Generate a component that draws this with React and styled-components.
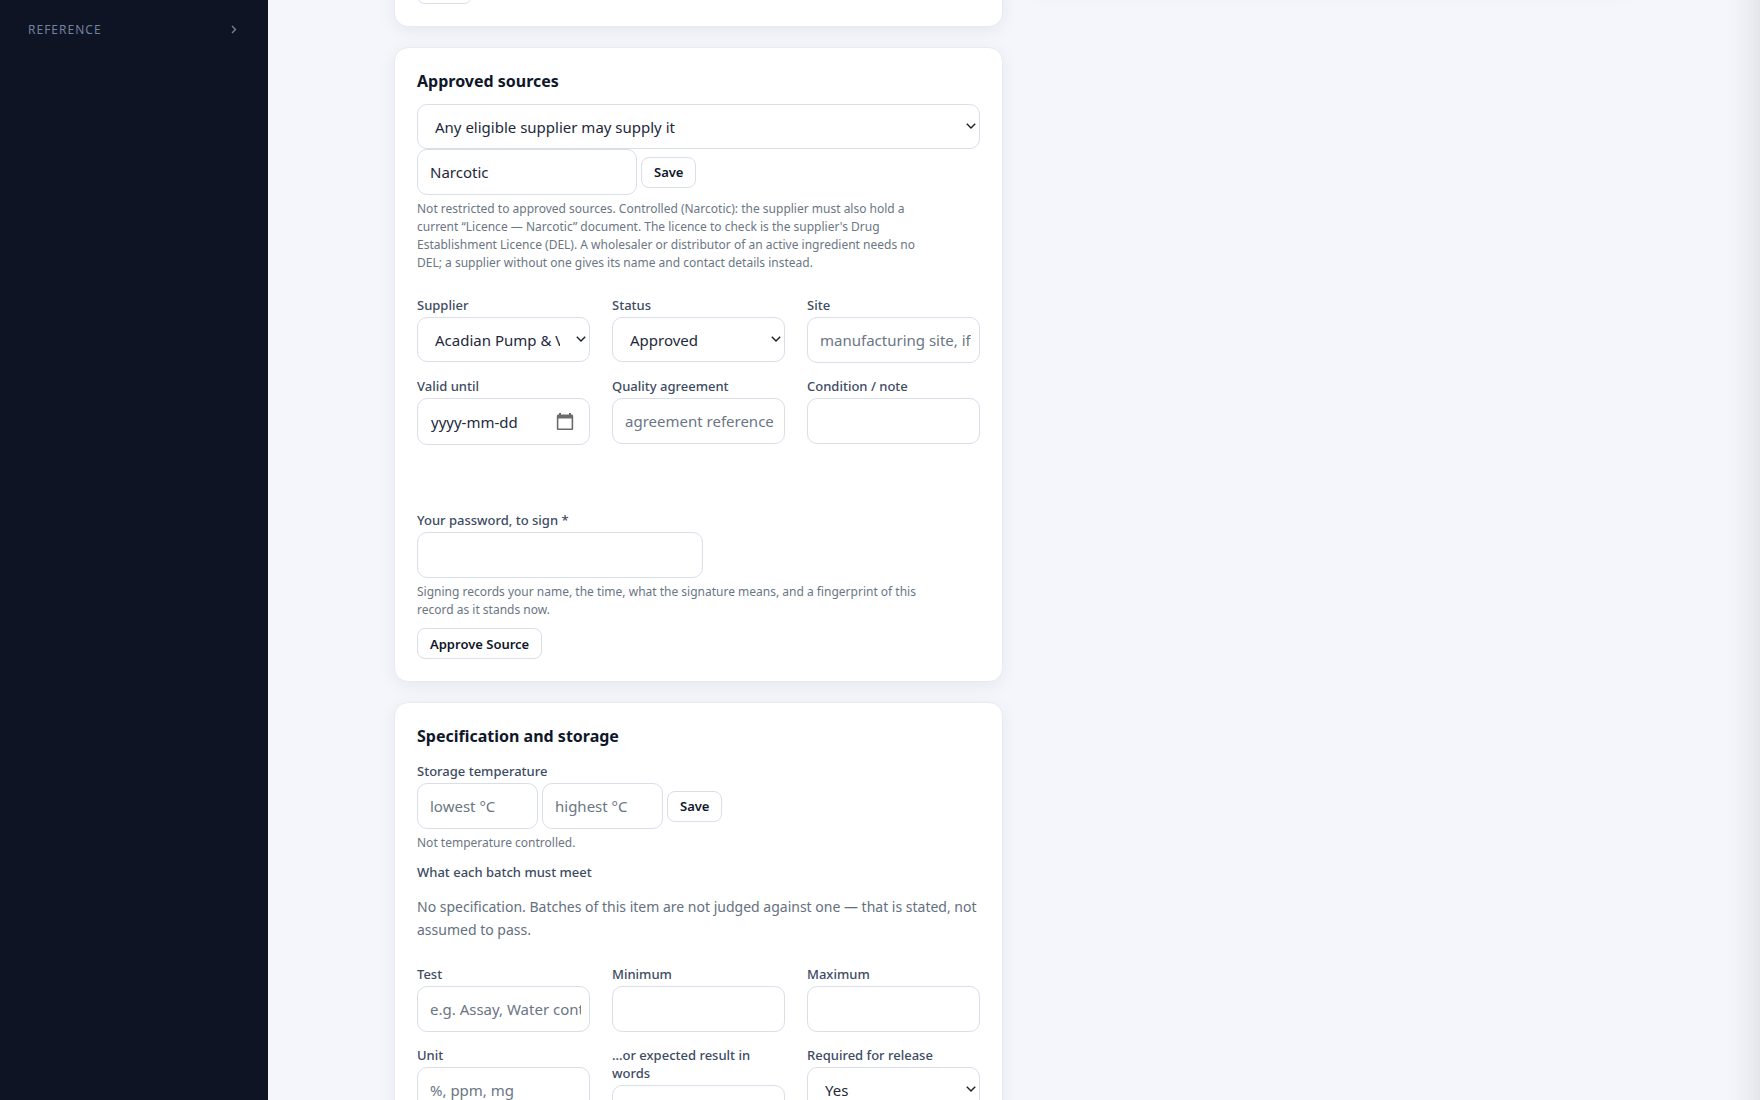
import React, { useState } from 'react';
import styled, { createGlobalStyle } from 'styled-components';

const GlobalStyle = createGlobalStyle`
  *,
  *::before,
  *::after {
    box-sizing: border-box;
  }

  body {
    margin: 0;
    background: #f4f6fb;
    color: #0f172a;
    font-family: "Noto Sans", "Open Sans", sans-serif;
    font-size: 15px;
  }

  button,
  input,
  select {
    font-family: inherit;
  }
`;

const Shell = styled.div`
  display: flex;
  height: 100vh;
  overflow: hidden;
`;

const Sidebar = styled.nav`
  flex: 0 0 268px;
  padding: 19px 30px 19px 28px;
  background: #0e1424;
`;

const SidebarGroup = styled.button`
  display: flex;
  align-items: center;
  justify-content: space-between;
  width: 100%;
  padding: 0;
  border: 0;
  background: none;
  color: #71829c;
  font-size: 12px;
  line-height: 22px;
  letter-spacing: 1px;
  cursor: pointer;
`;

const Main = styled.main`
  flex: 1;
  min-width: 0;
  padding: 0 32px;
`;

const Columns = styled.div`
  display: grid;
  grid-template-columns: 1fr 1fr;
  gap: 22px;
  align-items: start;
  max-width: 1240px;
  margin: -50px auto 0;
`;

const Column = styled.div`
  display: flex;
  flex-direction: column;
  gap: 20px;
  min-width: 0;
`;

const Card = styled.section`
  padding: 22px;
  background: #fff;
  border: 1px solid #e8eaf0;
  border-radius: 14px;
  box-shadow: 0 4px 18px rgba(15, 23, 42, 0.06);
`;

const SideCard = styled(Card)`
  padding: 18px;
`;

const CardTitle = styled.h2`
  margin: 0 0 12px;
  font-size: 16px;
  font-weight: 700;
  line-height: 22px;
`;

const TextInput = styled.input`
  display: block;
  width: ${(props) => props.$width || '100%'};
  min-width: 0;
  height: 46px;
  padding: 0 8px 0 12px;
  border: 1px solid #d9dee8;
  border-radius: 10px;
  background: #fff;
  color: #1e293b;
  font-size: 15px;

  &::placeholder {
    color: #6b7684;
    opacity: 1;
  }
`;

const SelectWrapper = styled.div`
  position: relative;

  svg {
    position: absolute;
    top: 19px;
    right: 4px;
    pointer-events: none;
  }
`;

const SelectBox = styled.select`
  appearance: none;
  display: block;
  width: 100%;
  height: 45px;
  padding: 0 29px 0 17px;
  border: 1px solid #d9dee8;
  border-radius: 10px;
  background: #fff;
  color: #1e293b;
  font-size: 15px;
`;

const DateBox = styled.div`
  display: flex;
  align-items: center;
  height: 47px;
  padding-right: 15px;
  border: 1px solid #d9dee8;
  border-radius: 10px;
  background: #fff;
`;

const DateInput = styled.input`
  flex: 1;
  min-width: 0;
  padding: 0 0 0 13px;
  border: 0;
  background: none;
  font-size: 15px;

  &::placeholder {
    color: #1e293b;
    opacity: 1;
  }
`;

const PickerButton = styled.button`
  display: flex;
  padding: 0;
  border: 0;
  background: none;
  color: #6b6b6b;
  cursor: pointer;
`;

const Button = styled.button`
  display: block;
  min-width: 55px;
  height: 31px;
  padding: 0 12px;
  border: 1px solid #d9dee8;
  border-radius: 8px;
  background: #fff;
  color: #0f172a;
  font-size: 13px;
  font-weight: 600;
  cursor: pointer;
`;

const InlineForm = styled.form`
  display: flex;
  align-items: center;
  gap: 4px;
`;

const Label = styled.label`
  display: block;
  margin-bottom: 3px;
  color: #3d4b63;
  font-size: 13px;
  font-weight: 500;
  line-height: 18px;
`;

const SubHeading = styled.h3`
  margin: 11px 0 14px;
  color: #3d4b63;
  font-size: 13px;
  font-weight: 500;
  line-height: 18px;
`;

const Hint = styled.p`
  max-width: 500px;
  margin: 5px 0 0;
  color: #6b7684;
  font-size: 12px;
  line-height: 18px;
`;

const Note = styled.p`
  margin: 0;
  color: #64707f;
  font-size: 14px;
  line-height: 23px;
`;

const FieldGrid = styled.div`
  display: grid;
  grid-template-columns: repeat(3, minmax(0, 1fr));
  gap: 14px 22px;
  align-items: start;
  margin-top: 24px;
`;

const StorageBlock = styled.div`
  padding-top: 3px;
`;

const SignBlock = styled.div`
  margin: 66px 0 9px;
`;

const Drawer = styled.aside`
  position: fixed;
  top: -40px;
  bottom: -40px;
  left: 100%;
  width: 420px;
  background: #fff;
  box-shadow: -4px 0 30px rgba(15, 23, 42, 0.12);
`;

const ChevronIcon = () => (
  <svg width="8" height="10" viewBox="0 0 8 10" fill="none" aria-hidden="true">
    <path d="M2 1 L5.5 4.5 L2 8" stroke="currentColor" strokeWidth="1.4" />
  </svg>
);

const SelectArrow = () => (
  <svg width="10" height="6" viewBox="0 0 10 6" fill="none" aria-hidden="true">
    <path d="M0.8 0.8 L5 5 L9.2 0.8" stroke="#1b1f27" strokeWidth="1.4" />
  </svg>
);

const CalendarIcon = () => (
  <svg width="18" height="20" viewBox="0 0 18 20" aria-hidden="true">
    <path
      fill="currentColor"
      fillRule="evenodd"
      d="M3 1h2v1.5h8V1h2v1.5h.6c.9 0 1.6.7 1.6 1.6v12.3c0 .9-.7 1.6-1.6 1.6H2.4c-.9 0-1.6-.7-1.6-1.6V4.1c0-.9.7-1.6 1.6-1.6H3V1zM2.4 6.5v9.9h13.2V6.5H2.4z"
    />
  </svg>
);

const Select = ({ options, ...rest }) => (
  <SelectWrapper>
    <SelectBox {...rest}>
      {options.map((option) => (
        <option key={option}>{option}</option>
      ))}
    </SelectBox>
    <SelectArrow />
  </SelectWrapper>
);

const Field = ({ id, label, children, ...rest }) => (
  <div>
    <Label htmlFor={id}>{label}</Label>
    {children || <TextInput id={id} type="text" {...rest} />}
  </div>
);

const SourcesCard = () => {
  const [controlled, setControlled] = useState('Narcotic');

  return (
    <Card>
      <CardTitle>Approved sources</CardTitle>
      <Select
        aria-label="Sourcing rule"
        options={['Any eligible supplier may supply it', 'Approved sources only']}
      />
      <InlineForm onSubmit={(e) => e.preventDefault()}>
        <TextInput
          $width="220px"
          aria-label="Controlled class"
          value={controlled}
          onChange={(e) => setControlled(e.target.value)}
        />
        <Button type="submit">Save</Button>
      </InlineForm>
      <Hint>
        Not restricted to approved sources. Controlled (Narcotic): the supplier
        must also hold a current “Licence — Narcotic” document. The licence to
        check is the supplier's Drug Establishment Licence (DEL). A wholesaler
        or distributor of an active ingredient needs no DEL; a supplier without
        one gives its name and contact details instead.
      </Hint>
      <FieldGrid>
        <Field id="supplier" label="Supplier">
          <Select id="supplier" options={['Acadian Pump & Valve']} />
        </Field>
        <Field id="status" label="Status">
          <Select id="status" options={['Approved', 'Suspended']} />
        </Field>
        <Field id="site" label="Site" placeholder="manufacturing site, if it matters" />
        <Field id="valid-until" label="Valid until">
          <DateBox>
            <DateInput id="valid-until" type="text" placeholder="yyyy-mm-dd" />
            <PickerButton type="button" aria-label="Pick a date">
              <CalendarIcon />
            </PickerButton>
          </DateBox>
        </Field>
        <Field id="agreement" label="Quality agreement" placeholder="agreement reference" />
        <Field id="condition" label="Condition / note" />
      </FieldGrid>
      <SignBlock>
        <Label htmlFor="password">Your password, to sign *</Label>
        <TextInput id="password" type="password" $width="286px" />
        <Hint>
          Signing records your name, the time, what the signature means, and a
          fingerprint of this record as it stands now.
        </Hint>
      </SignBlock>
      <Button type="button">Approve Source</Button>
    </Card>
  );
};

const SpecificationCard = () => (
  <Card>
    <CardTitle>Specification and storage</CardTitle>
    <StorageBlock>
      <Label htmlFor="lowest">Storage temperature</Label>
      <InlineForm onSubmit={(e) => e.preventDefault()}>
        <TextInput id="lowest" $width="121px" placeholder="lowest °C" />
        <TextInput $width="121px" aria-label="Highest temperature" placeholder="highest °C" />
        <Button type="submit">Save</Button>
      </InlineForm>
      <Hint>Not temperature controlled.</Hint>
    </StorageBlock>
    <SubHeading>What each batch must meet</SubHeading>
    <Note>
      No specification. Batches of this item are not judged against one — that
      is stated, not assumed to pass.
    </Note>
    <FieldGrid>
      <Field id="test" label="Test" placeholder="e.g. Assay, Water content" />
      <Field id="minimum" label="Minimum" />
      <Field id="maximum" label="Maximum" />
      <Field id="unit" label="Unit" placeholder="%, ppm, mg" />
      <Field id="expected" label="…or expected result in words" />
      <Field id="required" label="Required for release">
        <Select id="required" options={['Yes', 'No']} />
      </Field>
    </FieldGrid>
  </Card>
);

const App = () => (
  <>
    <GlobalStyle />
    <Shell>
      <Sidebar>
        <SidebarGroup type="button">
          REFERENCE
          <ChevronIcon />
        </SidebarGroup>
      </Sidebar>
      <Main>
        <Columns>
          <Column>
            <Card>
              <Button type="button" aria-label="Save" />
            </Card>
            <SourcesCard />
            <SpecificationCard />
          </Column>
          <SideCard />
        </Columns>
      </Main>
    </Shell>
    <Drawer aria-hidden="true" />
  </>
);

export default App;
